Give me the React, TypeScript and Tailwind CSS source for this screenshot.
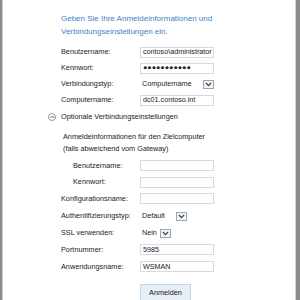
import React from "react";

const Chevron = () => (
  <svg width="7" height="5" viewBox="0 0 7 5" className="block">
    <path d="M0.8 0.8 L3.5 3.6 L6.2 0.8" fill="none" stroke="#333" strokeWidth="1.1" />
  </svg>
);

const Input = ({ value = "" }: { value?: string }) => (
  <div className="w-[74px] h-[11px] border border-[#d3dbe4] bg-white flex items-center px-[2px] text-[7.2px] text-[#222] leading-none overflow-hidden whitespace-nowrap">
    {value}
  </div>
);

const Select = ({ value, w }: { value: string; w: string }) => (
  <div className={`${w} h-[11px] flex items-center text-[7.2px] text-[#222] leading-none`}>
    <span className="flex-1 pl-[2px] whitespace-nowrap overflow-hidden">{value}</span>
    <span className="w-[11px] h-[9px] border border-[#9aa7b5] bg-[#f3f5f8] flex items-center justify-center">
      <Chevron />
    </span>
  </div>
);

const Row = ({ label, children, indent = false, h = "h-[16px]" }: { label: string; children: React.ReactNode; indent?: boolean; h?: string }) => (
  <div className={`flex items-center ${h}`}>
    <div className={`w-[79px] text-[7.3px] text-[#222] leading-none ${indent ? "pl-[12px]" : ""}`}>{label}</div>
    {children}
  </div>
);

export default function App() {
  return (
    <div className="w-[300px] h-[300px] flex bg-white overflow-hidden" style={{ fontFamily: '"Liberation Sans", Arial, sans-serif' }}>
      <div className="w-[2px] bg-[#8c8c8c]" />
      <div className="w-[1px] bg-[#c8c8c8]" />
      <div className="flex-1 pl-[58px] pt-[12px]">
        <div className="text-[8px] leading-[13px] text-[#3f7fc4]">
          Geben Sie Ihre Anmeldeinformationen und
          <br />
          Verbindungseinstellungen ein.
        </div>
        <div className="mt-[6px]">
          <Row label="Benutzername:"><Input value="contoso\administrator" /></Row>
          <Row label="Kennwort:"><Input value="●●●●●●●●●●●" /></Row>
          <Row label="Verbindungstyp:"><Select value="Computername" w="w-[74px]" /></Row>
          <Row label="Computername:"><Input value="dc01.contoso.int" /></Row>
        </div>
        <div className="flex items-center h-[16px] mt-[1px] -ml-[13px]">
          <span className="w-[8px] h-[8px] rounded-full border border-[#9a9a9a] flex items-center justify-center mr-[5px]">
            <svg width="5" height="4" viewBox="0 0 5 4"><path d="M0.6 3 L2.5 1 L4.4 3" fill="none" stroke="#555" strokeWidth="0.9" /></svg>
          </span>
          <span className="text-[7.3px] text-[#222] leading-none">Optionale Verbindungseinstellungen</span>
        </div>
        <div className="mt-[6px] pl-[2px] text-[7.3px] leading-[12px] text-[#222]">
          Anmeldeinformationen für den Zielcomputer
          <br />
          (falls abweichend vom Gateway)
        </div>
        <div className="mt-[2px]">
          <Row label="Benutzername:" indent h="h-[17px]"><Input /></Row>
          <Row label="Kennwort:" indent h="h-[16px]"><Input /></Row>
          <Row label="Konfigurationsname:" h="h-[17px]"><Input /></Row>
          <Row label="Authentifizierungstyp:" h="h-[18px]"><Select value="Default" w="w-[47px]" /></Row>
          <Row label="SSL verwenden:" h="h-[16px]"><Select value="Nein" w="w-[31px]" /></Row>
          <Row label="Portnummer:" h="h-[17px]"><Input value="5985" /></Row>
          <Row label="Anwendungsname:" h="h-[17px]"><Input value="WSMAN" /></Row>
        </div>
        <div className="pl-[79px] mt-[9px]">
          <div className="w-[51px] h-[17px] border border-[#c9d5e2] bg-[#e8eef5] flex items-center justify-center text-[7.3px] text-[#222] leading-none">
            Anmelden
          </div>
        </div>
      </div>
      <div className="w-[1px] bg-[#d4d4d4]" />
      <div className="w-[4px] bg-[#8c8c8c]" />
    </div>
  );
}
